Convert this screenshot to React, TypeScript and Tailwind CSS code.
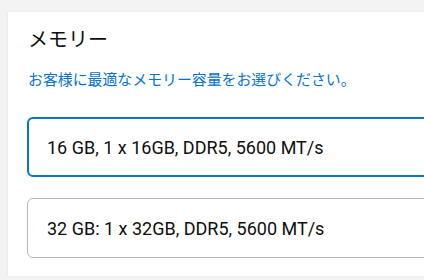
import React from "react";

export default function App() {
  return (
    <div className="w-[424px] h-[280px] overflow-hidden bg-[#f3f3f3] pl-[8px] pt-[12px]">
      <div className="w-[470px] bg-white shadow-[0_0_3px_rgba(0,0,0,0.08)] pl-[19px] pt-[13px] pb-[18px] font-['Noto_Sans_CJK_JP',sans-serif]">
        <h2 className="text-[20px] leading-[27px] text-[#0e0e0e] pl-[1px]">メモリー</h2>
        <p className="mt-[16px] text-[14.9px] leading-[22px] text-[#0672cb] pl-[1px]">
          お客様に最適なメモリー容量をお選びください。
        </p>
        <div className="mt-[27px] flex flex-col gap-[21px] pr-[20px] font-['Roboto',sans-serif] text-[18px] text-[#0e0e0e]">
          <div className="h-[60px] flex items-center rounded-[6px] border-2 border-[#0076ce] pl-[18px]">
            16 GB, 1 x 16GB, DDR5, 5600 MT/s
          </div>
          <div className="h-[60px] flex items-center rounded-[6px] border border-[#b6b6b6] pl-[19px]">
            32 GB: 1 x 32GB, DDR5, 5600 MT/s
          </div>
        </div>
      </div>
    </div>
  );
}
